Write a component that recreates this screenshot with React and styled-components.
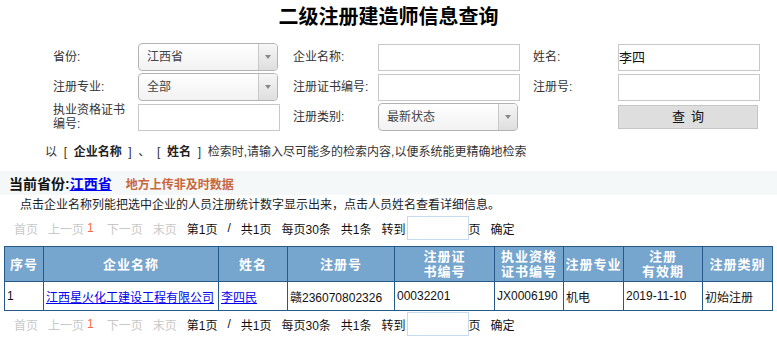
import React from "react";
import styled, { createGlobalStyle } from "styled-components";

const Global = createGlobalStyle`
  html, body { margin: 0; padding: 0; background: #fff; }
  body {
    font-family: "Liberation Sans", "Noto Sans CJK SC", sans-serif;
    font-size: 12px;
    color: #222;
  }
`;

const Page = styled.div`
  width: 777px;
`;

const Title = styled.h1`
  margin: 0;
  height: 34px;
  line-height: 34px;
  text-align: center;
  font-size: 20px;
  font-weight: bold;
  color: #000;
`;

const Form = styled.div`
  margin: 8px 0 0 53px;
  display: grid;
  grid-template-columns: 85px 155px 85px 155px 85px 155px;
  grid-auto-rows: 30px;
  align-items: center;
`;

const Label = styled.div`
  width: 80px;
  line-height: 14px;
  color: #333;
`;

const SelectBox = styled.div`
  box-sizing: border-box;
  width: 140px;
  height: 28px;
  display: flex;
  border: 1px solid #b4b4b4;
  border-radius: 4px;
  background: linear-gradient(#ffffff, #f2f2f2);
  overflow: hidden;
`;

const SelectText = styled.div`
  flex: 1;
  padding-left: 8px;
  line-height: 26px;
  color: #444;
`;

const SelectArrow = styled.div`
  width: 18px;
  border-left: 1px solid #c8c8c8;
  background: linear-gradient(#f6f6f6, #dedede);
  display: flex;
  align-items: center;
  justify-content: center;
  &::after {
    content: "";
    border-left: 3px solid transparent;
    border-right: 3px solid transparent;
    border-top: 4px solid #888;
  }
`;

const TextInput = styled.div`
  box-sizing: border-box;
  width: 142px;
  height: 27px;
  border: 1px solid #c8c8c8;
  line-height: 25px;
  font-size: 13px;
  color: #111;
`;

const QueryButton = styled.div`
  box-sizing: border-box;
  width: 140px;
  height: 24px;
  border: 1px solid #c6c6c6;
  background: #dedede;
  text-align: center;
  line-height: 22px;
  font-size: 13px;
  letter-spacing: 6px;
  text-indent: 6px;
  color: #111;
`;

const Hint = styled.div`
  margin: 10px 0 0 45px;
  line-height: 20px;
  color: #333;
  white-space: pre;
  b { color: #222; }
`;

const ProvinceBar = styled.div`
  margin-top: 9px;
  height: 24px;
  background: #f4f8f9;
  display: flex;
  align-items: center;
  padding-left: 9px;
`;

const ProvinceLabel = styled.span`
  font-size: 14px;
  font-weight: bold;
  color: #111;
  a { color: #0000ee; text-decoration: underline; }
`;

const Warn = styled.span`
  margin-left: 14px;
  font-size: 12px;
  font-weight: bold;
  color: #c8673c;
`;

const Help = styled.div`
  line-height: 20px;
  padding-left: 20px;
  color: #222;
`;

const Pager = styled.div`
  margin-top: ${(p) => p.$mt || 0}px;
  height: 24px;
  display: flex;
  align-items: center;
  padding-left: 14px;
  gap: 10px;
  color: #111;
`;

const Dim = styled.span`
  color: #c8c8c8;
  margin-left: ${(p) => p.$ml || 0}px;
`;

const Cur = styled.span`
  color: #ff6a3d;
  margin-left: -7px;
`;

const Jump = styled.span`
  display: flex;
  align-items: center;
`;

const JumpInput = styled.div`
  box-sizing: border-box;
  width: 62px;
  height: 24px;
  border: 1px solid #c6dbee;
  margin-left: 1px;
`;

const Table = styled.table`
  margin: 6px 0 0 4px;
  border-collapse: collapse;
  table-layout: fixed;
  width: 768px;
  border: 1px solid #245a8a;
`;

const Th = styled.th`
  background: #76a5cd;
  color: #fff;
  font-size: 13px;
  font-weight: bold;
  letter-spacing: 1px;
  line-height: 15px;
  height: 34px;
  padding: 0;
  border: 1px solid #245a8a;
  text-align: center;
`;

const Td = styled.td`
  height: 28px;
  padding: 0 0 0 2px;
  border: 1px solid #245a8a;
  font-size: 12px;
  color: #111;
  white-space: nowrap;
  overflow: hidden;
  a { color: #0000ee; text-decoration: underline; }
`;

function Select({ value }) {
  return (
    <SelectBox>
      <SelectText>{value}</SelectText>
      <SelectArrow />
    </SelectBox>
  );
}

function PagerRow({ mt }) {
  return (
    <Pager $mt={mt}>
      <Dim>首页</Dim>
      <Dim>上一页</Dim>
      <Cur>1</Cur>
      <Dim $ml={3}>下一页</Dim>
      <Dim>末页</Dim>
      <span>第1页</span>
      <span>/</span>
      <span>共1页</span>
      <span>每页30条</span>
      <span>共1条</span>
      <Jump>
        转到
        <JumpInput />
        页
      </Jump>
      <span>确定</span>
    </Pager>
  );
}

const cols = [39, 175, 69, 107, 100, 69, 60, 79, 70];
const headers = [
  "序号",
  "企业名称",
  "姓名",
  "注册号",
  ["注册证", "书编号"],
  ["执业资格", "证书编号"],
  "注册专业",
  ["注册", "有效期"],
  "注册类别",
];

export default function App() {
  return (
    <Page>
      <Global />
      <Title>二级注册建造师信息查询</Title>
      <Form>
        <Label>省份:</Label>
        <Select value="江西省" />
        <Label>企业名称:</Label>
        <TextInput />
        <Label>姓名:</Label>
        <TextInput>李四</TextInput>

        <Label>注册专业:</Label>
        <Select value="全部" />
        <Label>注册证书编号:</Label>
        <TextInput />
        <Label>注册号:</Label>
        <TextInput />

        <Label>执业资格证书编号:</Label>
        <TextInput />
        <Label>注册类别:</Label>
        <Select value="最新状态" />
        <span />
        <QueryButton>查询</QueryButton>
      </Form>
      <Hint>
        以  [  <b>企业名称</b>  ]  、  [  <b>姓名</b>  ]  检索时,请输入尽可能多的检索内容,以便系统能更精确地检索
      </Hint>
      <ProvinceBar>
        <ProvinceLabel>
          当前省份:<a>江西省</a>
        </ProvinceLabel>
        <Warn>地方上传非及时数据</Warn>
      </ProvinceBar>
      <Help>点击企业名称列能把选中企业的人员注册统计数字显示出来，点击人员姓名查看详细信息。</Help>
      <PagerRow mt={1} />
      <Table>
        <colgroup>
          {cols.map((c, i) => (
            <col key={i} style={{ width: c }} />
          ))}
        </colgroup>
        <thead>
          <tr>
            {headers.map((h, i) => (
              <Th key={i}>
                {Array.isArray(h) ? (
                  <>
                    {h[0]}
                    <br />
                    {h[1]}
                  </>
                ) : (
                  h
                )}
              </Th>
            ))}
          </tr>
        </thead>
        <tbody>
          <tr>
            <Td>1</Td>
            <Td>
              <a>江西星火化工建设工程有限公司</a>
            </Td>
            <Td>
              <a>李四民</a>
            </Td>
            <Td>赣236070802326</Td>
            <Td>00032201</Td>
            <Td>JX0006190</Td>
            <Td>机电</Td>
            <Td>2019-11-10</Td>
            <Td>初始注册</Td>
          </tr>
        </tbody>
      </Table>
      <PagerRow mt={1} />
    </Page>
  );
}
